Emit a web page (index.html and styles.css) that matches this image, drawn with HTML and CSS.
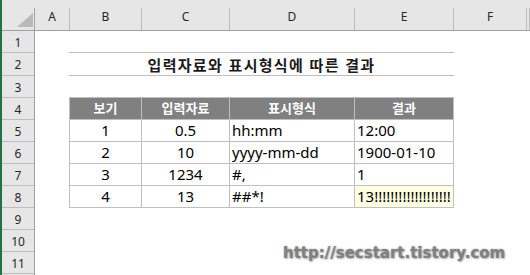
FILE: index.html
```html
<!DOCTYPE html>
<html lang="ko">
<head>
<meta charset="utf-8">
<title>입력자료와 표시형식에 따른 결과</title>
<link rel="stylesheet" href="styles.css">
</head>
<body>
<div class="sheet">
  <div class="edge"></div>
  <div class="ch"><div class="lbl corner"><svg width="32" height="21" viewBox="0 0 32 21"><polygon points="15,19 31,19 31,5" fill="#b9b9b9"/></svg></div></div>
  <div class="ch"><div class="lbl">A</div></div>
  <div class="ch"><div class="lbl">B</div></div>
  <div class="ch"><div class="lbl">C</div></div>
  <div class="ch"><div class="lbl">D</div></div>
  <div class="ch"><div class="lbl">E</div></div>
  <div class="ch"><div class="lbl">F</div></div>
  <div class="ch"><div class="lbl"></div></div>

  <div class="rh">1</div>
  <div class="rh">2</div>
  <div class="rh">3</div>
  <div class="rh">4</div>
  <div class="rh">5</div>
  <div class="rh">6</div>
  <div class="rh">7</div>
  <div class="rh">8</div>
  <div class="rh">9</div>
  <div class="rh">10</div>
  <div class="rh">11</div>
  <div class="rh"></div>

  <div class="title">입력자료와 표시형식에 따른 결과</div>

  <div class="tbl">
    <div class="th">보기</div><div class="th">입력자료</div><div class="th">표시형식</div><div class="th">결과</div>
    <div class="td c">1</div><div class="td c">0.5</div><div class="td">hh:mm</div><div class="td">12:00</div>
    <div class="td c">2</div><div class="td c">10</div><div class="td">yyyy-mm-dd</div><div class="td">1900-01-10</div>
    <div class="td c">3</div><div class="td c">1234</div><div class="td">#,</div><div class="td">1</div>
    <div class="td c">4</div><div class="td c">13</div><div class="td">##*!</div><div class="td hl">13!!!!!!!!!!!!!!!!!!!</div>
  </div>
</div>
<div class="watermark">http://secstart.tistory.com</div>
</body>
</html>
```
FILE: styles.css
```css
html, body {
  margin: 0;
  padding: 0;
  background: #ffffff;
  overflow: hidden;
}

.sheet {
  width: 530px;
  height: 275px;
  display: grid;
  grid-template-columns: 2px 33px 35px 72px 88px 125px 99px 73px 1fr;
  grid-template-rows: 31px 22px 23px repeat(9, 22px) 1fr;
  font-family: "Noto Sans", "Noto Sans CJK KR", sans-serif;
  color: #000;
  background: #fff;
}

.edge {
  grid-column: 1;
  grid-row: 1 / -1;
  background: #217346;
}

.ch {
  background: #e6e6e6;
  border-bottom: 1px solid #9f9f9f;
  display: flex;
  flex-direction: column;
  justify-content: flex-end;
}

.ch .lbl {
  height: 22px;
  box-sizing: border-box;
  border-right: 1px solid #bdbdbd;
  font-size: 12px;
  line-height: 18px;
  text-align: center;
  color: #262626;
}

.ch .corner {
  border-right-color: #a3a3a3;
}

.corner svg {
  display: block;
}

.rh {
  grid-column: 2;
  background: #e6e6e6;
  border-right: 1px solid #9f9f9f;
  border-bottom: 1px solid #bdbdbd;
  font-size: 12px;
  color: #262626;
  display: flex;
  align-items: center;
  justify-content: center;
  padding-top: 1px;
  box-sizing: border-box;
}

.title {
  grid-column: 4 / 8;
  grid-row: 3;
  margin-top: -1px;
  margin-left: -1px;
  border-top: 1px solid #bfbfbf;
  border-bottom: 1px solid #bfbfbf;
  display: flex;
  align-items: center;
  justify-content: center;
  font-family: "Noto Sans CJK KR", sans-serif;
  font-weight: 700;
  font-size: 15px;
  letter-spacing: 1.3px;
  color: #1a1a1a;
  padding-top: 1px;
}

.tbl {
  grid-column: 4 / 8;
  grid-row: 5 / 10;
  margin-top: -1px;
  margin-left: -1px;
  display: grid;
  grid-template-columns: 72px 88px 125px 1fr;
  grid-auto-rows: 22px;
  border-right: 1px solid #bfbfbf;
  border-bottom: 1px solid #bfbfbf;
}

.th, .td {
  border-left: 1px solid #bfbfbf;
  border-top: 1px solid #bfbfbf;
  overflow: hidden;
  white-space: nowrap;
}

.th {
  background: #808080;
  color: #ffffff;
  font-family: "Noto Sans CJK KR", sans-serif;
  font-weight: 700;
  font-size: 13px;
  line-height: 20px;
  text-align: center;
}

.td {
  font-size: 15px;
  line-height: 20px;
  padding-left: 2px;
}

.td.c {
  text-align: center;
  padding-left: 0;
}

.td.hl {
  background: #ffffe1;
}

.watermark {
  position: absolute;
  left: 283px;
  top: 246px;
  font-family: "DejaVu Sans", Verdana, sans-serif;
  font-weight: 700;
  font-size: 15px;
  line-height: 15px;
  color: #808080;
  text-shadow: 0 0 2px rgba(0, 0, 0, 0.35), 1px 1px 2px rgba(0, 0, 0, 0.25);
  white-space: nowrap;
}
```
